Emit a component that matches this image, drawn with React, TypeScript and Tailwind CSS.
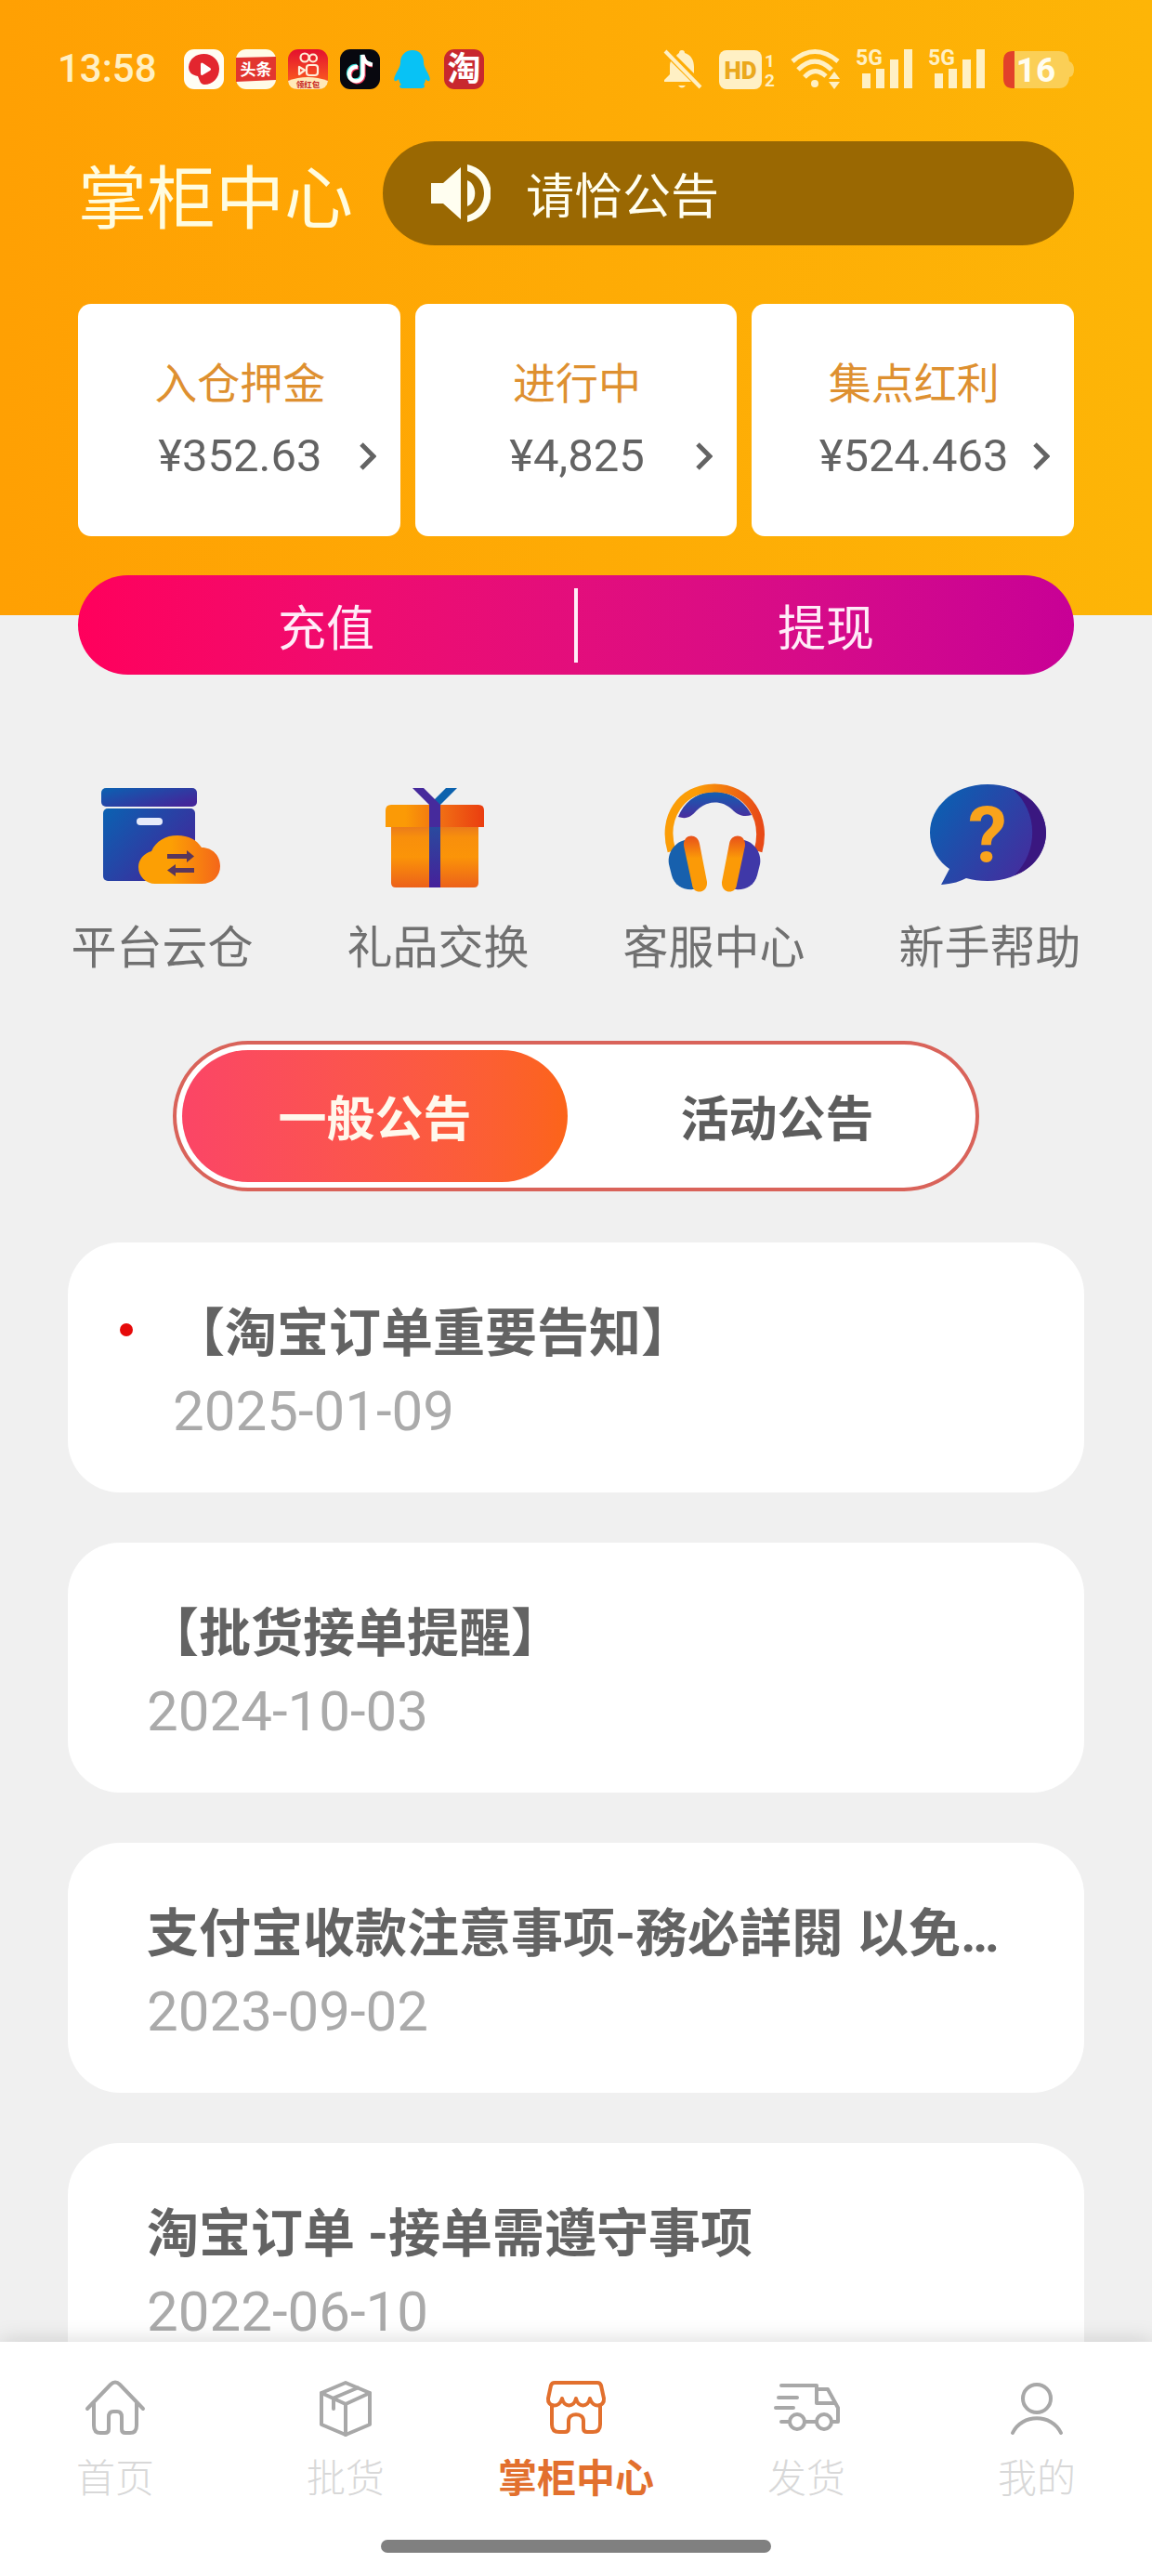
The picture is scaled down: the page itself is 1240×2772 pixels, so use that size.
import { useState } from "react";
import type { ReactNode } from "react";
import { clsx } from "clsx";

const balances = [
  { label: "入仓押金", value: "¥352.63" },
  { label: "进行中", value: "¥4,825" },
  { label: "集点红利", value: "¥524.463" },
];

const notices = [
  { title: "【淘宝订单重要告知】", date: "2025-01-09", unread: true },
  { title: "【批货接单提醒】", date: "2024-10-03" },
  { title: "支付宝收款注意事项-務必詳閱 以免…", date: "2023-09-02" },
  { title: "淘宝订单 -接单需遵守事项", date: "2022-06-10" },
];

function AppBadges() {
  return (
    <div className="flex items-center gap-[13px]">
      <svg className="size-[43px]" viewBox="0 0 43 43">
        <rect width="43" height="43" rx="11" fill="#fffdf5" />
        <path
          d="M21.500 5C31 5 38 12 38 21C38 31 31 38 22 38C18 38 17 34 15 29C9 28 5 25 5 19C6 10 13 5 21.500 5Z"
          fill="#e3262f"
        />
        <path d="M18 16.500Q18 13.500 20.500 15L28 20Q30 21.500 28 23L20.500 27.500Q18 29 18 26Z" fill="#fff" />
      </svg>
      <svg className="size-[43px]" viewBox="0 0 43 43">
        <rect width="43" height="43" rx="11" fill="#fffbe8" />
        <path d="M0 9L43 8V33L0 35Z" fill="#e2352f" />
        <text x="21.500" y="28" fontSize="17" fontWeight="700" textAnchor="middle" fill="#fff">
          头条
        </text>
      </svg>
      <svg className="size-[43px] overflow-visible" viewBox="0 0 43 43">
        <defs>
          <linearGradient id="kwai" x1="0" y1="0" x2="0" y2="1">
            <stop offset="0" stopColor="#e3102f" />
            <stop offset="1" stopColor="#ff6a1c" />
          </linearGradient>
        </defs>
        <rect width="43" height="43" rx="11" fill="url(#kwai)" />
        <path d="M0 34Q21 26 43 34Q42 43 32 43H11Q1 43 0 34Z" fill="#ffe9b8" />
        <g fill="none" stroke="#ffeeda" strokeWidth="2.200">
          <circle cx="18" cy="9" r="4.500" />
          <circle cx="27" cy="9.500" r="4" />
          <rect x="20" y="17" width="12" height="11" rx="3" />
          <path d="M18 22.500L12 19V27Z" strokeLinejoin="round" />
        </g>
        <text x="21.500" y="40.500" fontSize="8.500" fontWeight="700" textAnchor="middle" fill="#c5211d">
          领红包
        </text>
      </svg>
      <svg className="size-[43px]" viewBox="0 0 43 43">
        <rect width="43" height="43" rx="11" fill="#08080f" />
        <g fill="none" strokeWidth="4.200">
          <path d="M18 18C12 17.500 8.500 22 9 27C10 35 22 36 23.500 27V6C24 11 28 15 33 15.500" stroke="#3fe0dc" />
          <path d="M20 20C14 19.500 10.500 24 11 29C12 37 24 38 25.500 29V8C26 13 30 17 35 17.500" stroke="#f0365a" />
          <path d="M19 19C13 18.500 9.500 23 10 28C11 36 23 37 24.500 28V6C25 12 29 16 35 16.500" stroke="#fff" />
        </g>
      </svg>
      <svg className="size-[43px]" viewBox="0 0 43 43">
        <path
          d="M22 1C30 1 34 7 34 14C34 17 35 19 37 23C40 28 42 33 40 34C39 35 37 33 36 32C36 35 35 36 34 38C36 39 35 42 32 42H11C8 42 7 39 10 38C8 36 8 35 7 32C6 33 4 35 3 34C1 33 3 28 6 23C8 19 9 17 9 14C9 7 14 1 22 1Z"
          fill="#08c2f5"
        />
      </svg>
      <svg className="size-[43px] overflow-visible" viewBox="0 0 43 43">
        <rect width="43" height="43" rx="11" fill="#c8282e" />
        <text x="21.500" y="34" fontSize="36" fontWeight="700" textAnchor="middle" fill="#fff">
          淘
        </text>
      </svg>
    </div>
  );
}

function Signal() {
  return (
    <svg className="h-[44px] w-[61px] overflow-visible" viewBox="0 0 61 44" fill="#fff0c4">
      <text x="-1" y="18" className="font-['Roboto'] text-[23px] font-bold">
        5G
      </text>
      <rect x="6" y="27" width="9" height="16" />
      <rect x="21" y="22" width="9" height="21" />
      <rect x="36" y="12" width="9" height="31" />
      <rect x="51" y="1" width="9" height="42" />
    </svg>
  );
}

function StatusBar() {
  return (
    <div className="flex h-[44px] items-center justify-between pr-[84px] pl-[62px]">
      <div className="flex items-center gap-[29px]">
        <span className="text-[42px] leading-[44px] font-medium text-[#fff0c4]">13:58</span>
        <AppBadges />
      </div>
      <div className="flex items-center gap-[17px]">
        <svg className="h-[44px] w-[42px]" viewBox="0 0 42 44" fill="#fff0c4">
          <path d="M20 2C22 2 23 3 23 5C30 7 33 13 33 20V27L14 8C15 6 16 6 17 5C17 3 18 2 20 2Z" />
          <path d="M8 14L30 36H1V34L7 28V20C7 18 7 16 8 14Z" />
          <path d="M16 40H24Q20 45 16 40Z" />
          <path d="M2 3L40 42" stroke="#fff0c4" strokeWidth="4" />
        </svg>
        <svg className="h-[44px] w-[61px] overflow-visible" viewBox="0 0 61 44" fill="#fff0c4">
          <rect x="1" y="2" width="46" height="42" rx="8" />
          <text x="24" y="33" textAnchor="middle" fill="#eba81c" className="font-['Roboto'] text-[26px] font-black">
            HD
          </text>
          <text x="50" y="20" className="font-['Roboto'] text-[19px] font-bold">
            1
          </text>
          <text x="50" y="41" className="font-['Roboto'] text-[19px] font-bold">
            2
          </text>
        </svg>
        <svg className="h-[44px] w-[54px]" viewBox="0 0 54 44" fill="none" stroke="#fff0c4" strokeWidth="5">
          <path d="M2 14Q26 -7 51 14" />
          <path d="M8 23Q26 5 44 23" />
          <path d="M15 31Q26 19 38 30" />
          <circle cx="26" cy="38" r="4" fill="#fff0c4" stroke="none" />
          <path d="M47 25L53 33H41ZM41 36H53L47 44Z" fill="#fff0c4" stroke="none" />
        </svg>
        <Signal />
        <Signal />
        <svg className="h-[44px] w-[78px] overflow-visible" viewBox="0 0 78 44">
          <path d="M14 3H62Q72 3 73 14Q78 16 78 23Q78 30 73 31Q72 43 62 43H14Z" fill="#fbcf56" />
          <path d="M14 3V43H12Q2 43 2 32V14Q2 3 12 3Z" fill="#e2412a" />
          <text x="37" y="36" textAnchor="middle" fill="#fffdf0" className="font-['Roboto'] text-[37px] font-bold">
            16
          </text>
        </svg>
      </div>
    </div>
  );
}

function SpeakerIcon() {
  return (
    <svg className="h-[64px] w-[64px]" viewBox="0 0 64 64" fill="#fffef0">
      <path d="M0 21H13L32 4V60L13 43H0Z" />
      <path d="M39 18C50 22 50 42 39 46Z" />
      <path d="M39 1C73 8 73 56 39 63V56C63 49 63 15 39 8Z" />
    </svg>
  );
}

function WarehouseIcon() {
  return (
    <svg className="h-[120px] w-[132px]" viewBox="0 0 132 120">
      <defs>
        <linearGradient id="whBox" x1="0" y1="0" x2="1" y2="0.700">
          <stop offset="0" stopColor="#0a62b2" />
          <stop offset="1" stopColor="#43269a" />
        </linearGradient>
        <linearGradient id="whCloud">
          <stop offset="0.400" stopColor="#fc9f04" />
          <stop offset="1" stopColor="#f4661a" />
        </linearGradient>
      </defs>
      <rect y="6" width="103" height="20" rx="5" fill="url(#whBox)" />
      <rect x="2" y="28" width="99" height="78" rx="5" fill="url(#whBox)" />
      <rect x="38" y="38" width="28" height="8" rx="4" fill="#e6ebfa" />
      <path
        d="M58 109C48 109 40 101 40 91C40 83 46 76 54 74C59 63 69 57 82 57C94 57 103 62 108 70C120 70 128 79 128 90C128 101 120 109 108 109Z"
        fill="url(#whCloud)"
      />
      <path d="M71 77H92V73L100 79.500L92 86V82H71ZM100 92H80V88L71 94.500L80 101V97H100Z" fill="#59365c" />
    </svg>
  );
}

function GiftIcon() {
  return (
    <svg className="h-[120px] w-[132px]" viewBox="0 0 132 120">
      <defs>
        <linearGradient id="giftLid">
          <stop offset="0.200" stopColor="#fb9a06" />
          <stop offset="0.600" stopColor="#f06a14" />
          <stop offset="1" stopColor="#ea3d10" />
        </linearGradient>
        <linearGradient id="giftBody" x1="0" y1="0" x2="0" y2="1">
          <stop offset="0" stopColor="#ea7a1c" />
          <stop offset="0.180" stopColor="#f88f0c" />
          <stop offset="0.500" stopColor="#fb9408" />
          <stop offset="1" stopColor="#ec611a" />
        </linearGradient>
        <linearGradient id="giftBand" x1="0" y1="0" x2="0" y2="1">
          <stop offset="0" stopColor="#2a4a9e" />
          <stop offset="1" stopColor="#46209a" />
        </linearGradient>
      </defs>
      <path d="M15 47H109V108Q109 113 104 113H20Q15 113 15 108Z" fill="url(#giftBody)" />
      <path d="M9 30Q9 24 15 24H109Q115 24 115 30V48H9Z" fill="url(#giftLid)" />
      <path d="M74 6H86L67 25L60 20Z" fill="#0c62ae" />
      <path d="M38 6H50L68 24V48H56V24Z" fill="#462a9c" />
      <path d="M56 48H68V113H56Z" fill="url(#giftBand)" />
    </svg>
  );
}

function HeadsetIcon() {
  return (
    <svg className="h-[120px] w-[132px]" viewBox="0 0 132 120">
      <defs>
        <linearGradient id="hsBand">
          <stop offset="0.300" stopColor="#fb9d07" />
          <stop offset="1" stopColor="#e84a17" />
        </linearGradient>
        <linearGradient id="hsPad" x1="0" y1="0" x2="0" y2="1">
          <stop offset="0" stopColor="#1160b2" />
          <stop offset="1" stopColor="#4a2c9e" />
        </linearGradient>
        <linearGradient id="hsCup" x1="0" y1="0" x2="0" y2="1">
          <stop offset="0" stopColor="#e8501a" />
          <stop offset="0.400" stopColor="#fb9a07" />
        </linearGradient>
      </defs>
      <path
        d="M27 37C34 20 48 10 66 10C84 10 98 20 106 35C96 38 90 34 85 29C74 19 58 19 47 30C41 37 36 40 27 37Z"
        fill="url(#hsPad)"
      />
      <path
        d="M20 74C9 38 30 6 66 6C102 6 123 38 113 74"
        fill="none"
        stroke="url(#hsBand)"
        strokeWidth="9"
      />
      <path d="M34 62C22 65 15 77 17 88L20 100C23 111 32 116 44 115Z" fill="#1760ad" />
      <path d="M98 62C110 65 117 77 115 88L112 100C109 111 100 116 88 115Z" fill="#3f38a8" />
      <path d="M33 68C32 55 48 54 50 66L58 107C59 120 43 121 42 110Z" fill="url(#hsCup)" />
      <path d="M99 68C100 55 84 54 82 66L74 107C73 120 89 121 90 110Z" fill="url(#hsCup)" />
    </svg>
  );
}

function HelpIcon() {
  return (
    <svg className="h-[120px] w-[132px]" viewBox="0 0 132 120">
      <defs>
        <linearGradient id="helpBg" x1="0" y1="0.200" x2="1" y2="0.800">
          <stop offset="0" stopColor="#0a60b2" />
          <stop offset="1" stopColor="#4a289c" />
        </linearGradient>
      </defs>
      <path
        d="M63 2C98 2 126 25 126 54C126 83 98 106 63 106C54 106 47 105 40 103Q29 109 13 110L22 93C9 84 1 70 1 54C1 25 28 2 63 2Z"
        fill="url(#helpBg)"
      />
      <path d="M90 7C112 15 126 33 126 54C126 75 112 93 92 100C118 74 118 32 90 7Z" fill="#3a1780" />
      <text x="63" y="86" textAnchor="middle" fill="#f9a31c" className="font-['Roboto'] text-[84px] font-bold">
        ?
      </text>
    </svg>
  );
}

const services = [
  { label: "平台云仓", icon: <WarehouseIcon /> },
  { label: "礼品交换", icon: <GiftIcon /> },
  { label: "客服中心", icon: <HeadsetIcon /> },
  { label: "新手帮助", icon: <HelpIcon /> },
];

function NavIcon({ children }: { children: ReactNode }) {
  return (
    <svg
      className="h-[64px] w-[72px]"
      viewBox="0 0 72 64"
      fill="none"
      stroke="currentColor"
      strokeWidth="4"
      strokeLinecap="round"
      strokeLinejoin="round"
    >
      {children}
    </svg>
  );
}

const navItems = [
  {
    label: "首页",
    icon: (
      <NavIcon>
        <path d="M6 32L31 6Q36 1 41 6L66 32" />
        <path d="M13 26V50Q13 58 20 58H25Q29 58 29 54V41Q29 35 34 35H38Q43 35 43 41V54Q43 58 47 58H52Q59 58 59 50V26" />
      </NavIcon>
    ),
  },
  {
    label: "批货",
    icon: (
      <NavIcon>
        <path d="M36 4L62 15V49L36 60L10 49V15Z" />
        <path d="M10 15L36 27L62 15M36 27V60M49 9.500L23 20.500V32" />
      </NavIcon>
    ),
  },
  {
    label: "掌柜中心",
    active: true,
    icon: (
      <NavIcon>
        <path d="M13 4H59Q62 4 63 7L66 21C67 30 54 32 51 21C49 31 38 31 36 21C34 31 23 31 21 21C18 32 5 30 6 21L9 7Q10 4 13 4Z" />
        <path d="M10 28V49Q10 57 18 57H24Q28 57 28 53V45C28 36 44 36 44 45V53Q44 57 48 57H54Q62 57 62 49V28" />
      </NavIcon>
    ),
  },
  {
    label: "发货",
    icon: (
      <NavIcon>
        <path d="M9 7H47V11H59L70 31V46H64M47 11V26H67M6 20H26M3 31H22M9 46H17M34 46H46" />
        <circle cx="26" cy="46" r="8" />
        <circle cx="55" cy="46" r="8" />
      </NavIcon>
    ),
  },
  {
    label: "我的",
    icon: (
      <NavIcon>
        <circle cx="36" cy="21" r="15" />
        <path d="M10 58C20 37 52 37 62 58" />
      </NavIcon>
    ),
  },
];

export default function App() {
  const [tab, setTab] = useState(0);

  return (
    <div className="flex h-screen flex-col bg-[#f0f0f0] font-['Noto_Sans_CJK_SC',sans-serif] text-[#636363]">
      <main className="min-h-0 flex-1 overflow-y-auto [scrollbar-width:none]">
        <header className="bg-gradient-to-r from-[#ffa003] to-[#fdb507] pt-[52px] pb-[85px]">
          <div className="font-['Roboto','Noto_Sans_CJK_SC',sans-serif]">
            <StatusBar />
          </div>
          <div className="mt-14 flex items-center gap-8 px-[84px]">
            <h1 className="text-[74px] leading-[112px] text-[#fffce0]">掌柜中心</h1>
            <div className="flex h-[112px] flex-1 items-center gap-[38px] rounded-full bg-[#9a6802] pl-[52px]">
              <SpeakerIcon />
              <span className="text-[52px] leading-[64px] text-[#fffef0]">请恰公告</span>
            </div>
          </div>
          <div className="mt-[63px] grid grid-cols-3 gap-4 px-[84px] font-['Roboto','Noto_Sans_CJK_SC',sans-serif]">
            {balances.map((b) => (
              <button
                key={b.label}
                type="button"
                className="flex h-[250px] flex-col justify-center gap-[14px] rounded-[14px] bg-white pr-[26px] pl-[28px]"
              >
                <span className="w-full text-center text-[46px] leading-[64px] text-[#de9030]">{b.label}</span>
                <span className="grid w-full grid-cols-[1fr_auto_1fr] items-center">
                  <span className="col-start-2 text-[49px] leading-[64px]">{b.value}</span>
                  <svg className="h-[30px] w-[18px] justify-self-end" viewBox="0 0 18 30" fill="none">
                    <path d="M2 2L15 15L2 28" stroke="#636363" strokeWidth="5" />
                  </svg>
                </span>
              </button>
            ))}
          </div>
        </header>

        {/* hangs half way out of the header */}
        <div className="mx-[84px] -mt-[43px] flex h-[107px] items-center rounded-full bg-gradient-to-r from-[#ff005c] to-[#c80096] text-[52px] leading-[64px] text-[#ffecf8]">
          <button type="button" className="flex-1">
            充值
          </button>
          <span className="h-[80px] w-1 bg-[#ffecf8]" />
          <button type="button" className="flex-1">
            提现
          </button>
        </div>

        <section className="grid grid-cols-4 px-[26px] pt-[116px]">
          {services.map((s) => (
            <a key={s.label} href="#" className="flex flex-col items-center gap-[22px]">
              {s.icon}
              <span className="text-[49px] leading-[64px] text-[#707070]">{s.label}</span>
            </a>
          ))}
        </section>

        <div className="mx-auto mt-[72px] flex h-[162px] w-[70%] gap-[18px] rounded-full border-4 border-[#d9635a] bg-white p-[6px]">
          {["一般公告", "活动公告"].map((name, i) => (
            <button
              key={name}
              type="button"
              onClick={() => setTab(i)}
              className={clsx(
                "flex-1 rounded-full text-[52px] leading-[64px] font-bold",
                tab === i ? "bg-gradient-to-r from-[#fb4566] to-[#fc6418] text-[#fff8ec]" : "text-[#5c5c5c]",
              )}
            >
              {name}
            </button>
          ))}
        </div>

        <ul className="flex flex-col gap-[54px] px-[73px] pt-[55px] font-['Roboto','Noto_Sans_CJK_SC',sans-serif]">
          {notices.map((n) => (
            <li key={n.date}>
              <a
                href="#"
                className={clsx(
                  "flex h-[269px] rounded-[56px] bg-white pt-[54px] pr-[84px]",
                  n.unread ? "gap-[43px] pl-14" : "pl-[85px]",
                )}
              >
                {n.unread && <span className="mt-[33px] size-[14px] rounded-full bg-[#e60a0a]" />}
                <span className="flex min-w-0 flex-col">
                  <span className="truncate text-[56px] leading-[88px] font-bold">{n.title}</span>
                  <time className="text-[60px] leading-[80px] text-[#aaaaaa]">{n.date}</time>
                </span>
              </a>
            </li>
          ))}
        </ul>
      </main>

      <nav className="relative bg-white pt-10 pb-[25px] shadow-[0_0_24px_rgba(0,0,0,0.16)]">
        <div className="grid grid-cols-5">
          {navItems.map((item) => (
            <a
              key={item.label}
              href="#"
              className={clsx(
                "flex flex-col items-center gap-[10px] text-[42px] leading-[60px]",
                item.active ? "font-bold text-[#e2702e]" : "font-light text-[#a8a8a8]",
              )}
            >
              {item.icon}
              <span className={clsx(!item.active && "text-[#d8d8d8]")}>{item.label}</span>
            </a>
          ))}
        </div>
        <div className="mx-auto mt-[39px] h-[14px] w-[420px] rounded-full bg-[#808080]" />
      </nav>
    </div>
  );
}
